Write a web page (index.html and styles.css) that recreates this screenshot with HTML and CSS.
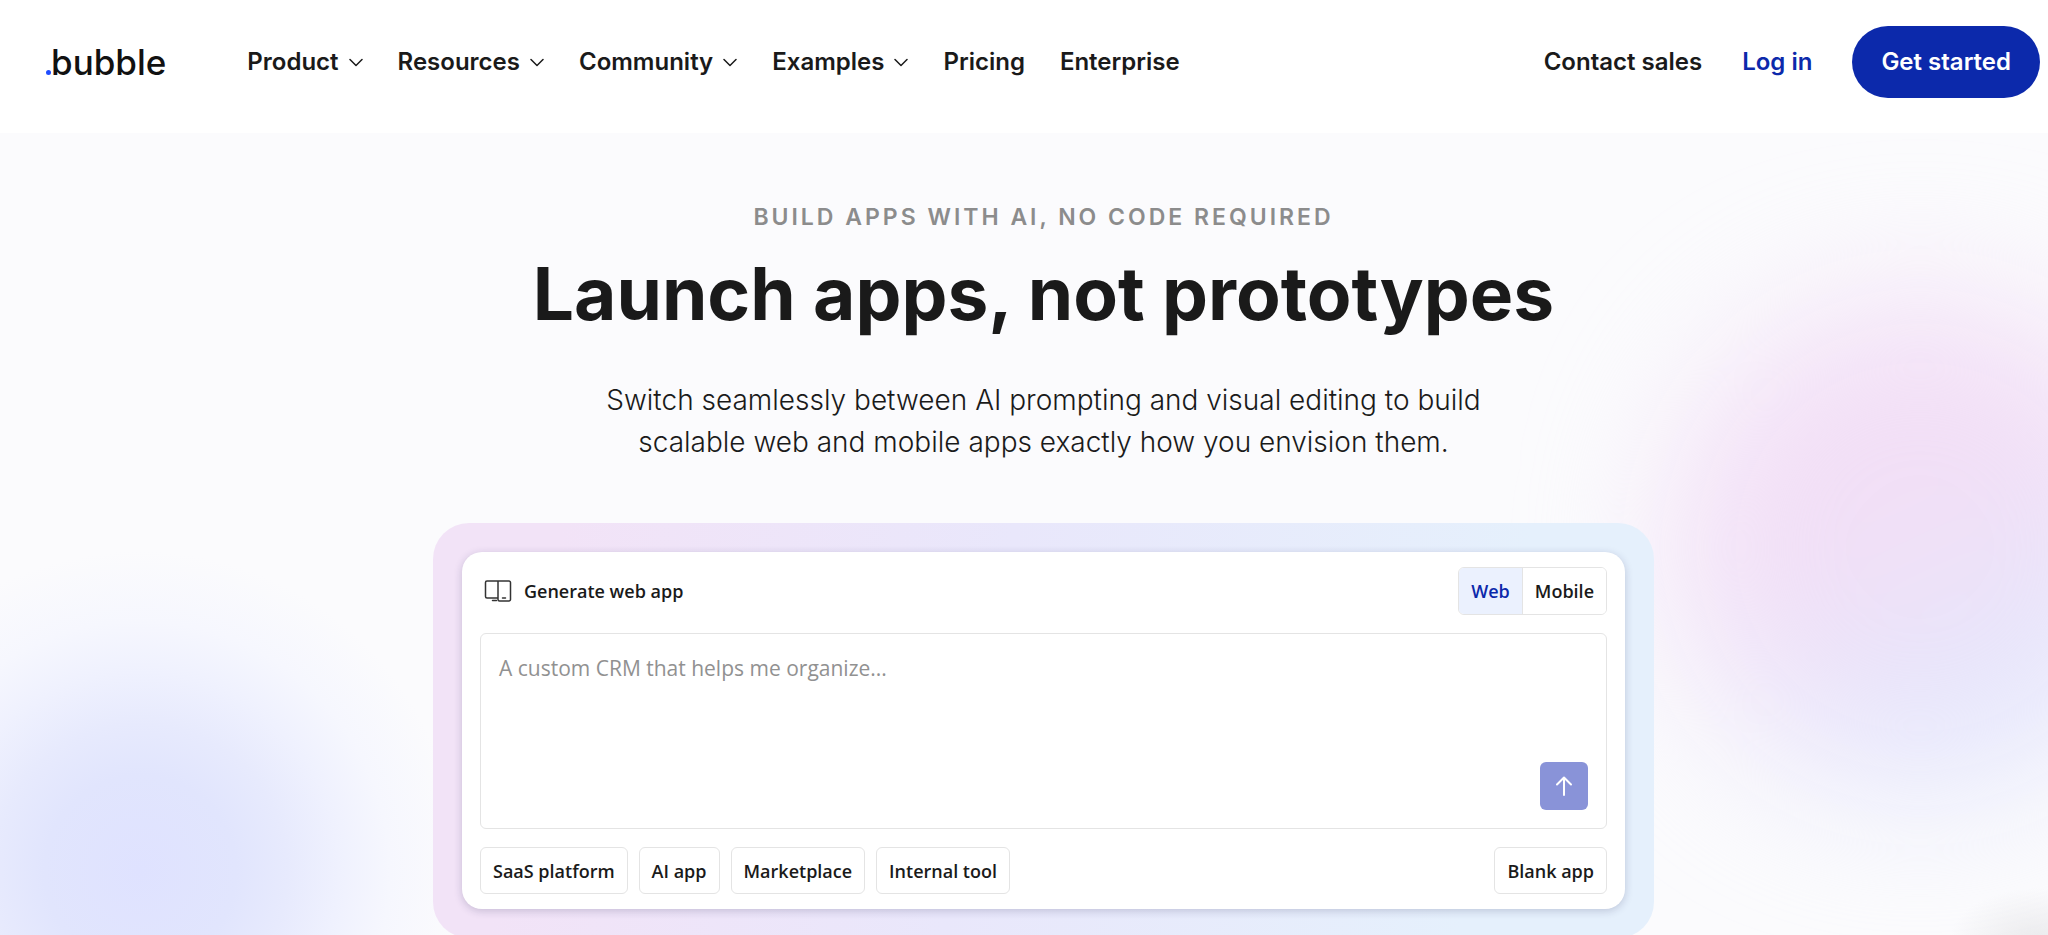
FILE: index.html
```html
<!DOCTYPE html>
<html lang="en">
<head>
    <meta charset="UTF-8">
    <meta name="viewport" content="width=device-width, initial-scale=1.0">
    <title>Bubble</title>
    <link rel="stylesheet" href="styles.css">
</head>
<body>
    <header class="header">
        <a class="logo" href="#"><span class="logo-dot"></span>bubble</a>
        <nav class="nav">
            <button class="nav-item" type="button">Product
                <svg class="chevron" viewBox="0 0 14 9"><path d="M1 1.5l6 6 6-6"/></svg>
            </button>
            <button class="nav-item" type="button">Resources
                <svg class="chevron" viewBox="0 0 14 9"><path d="M1 1.5l6 6 6-6"/></svg>
            </button>
            <button class="nav-item" type="button">Community
                <svg class="chevron" viewBox="0 0 14 9"><path d="M1 1.5l6 6 6-6"/></svg>
            </button>
            <button class="nav-item" type="button">Examples
                <svg class="chevron" viewBox="0 0 14 9"><path d="M1 1.5l6 6 6-6"/></svg>
            </button>
            <a class="nav-item" href="#">Pricing</a>
            <a class="nav-item" href="#">Enterprise</a>
        </nav>
        <div class="actions">
            <a class="nav-item" href="#">Contact sales</a>
            <a class="nav-item login" href="#">Log in</a>
            <a class="nav-item get-started" href="#">Get started</a>
        </div>
    </header>

    <main class="hero">
        <div class="glow glow-left"></div>
        <div class="glow glow-right"></div>
        <div class="glow glow-corner"></div>

        <p class="eyebrow">Build apps with AI, no code required</p>
        <h1 class="title">Launch apps, not prototypes</h1>
        <p class="subtitle">Switch seamlessly between AI prompting and visual editing to build<br>scalable web and mobile apps exactly how you envision them.</p>

        <div class="frame">
            <form class="card">
                <div class="row">
                    <label class="card-label" for="prompt">
                        <svg class="devices" viewBox="0 0 28 24">
                            <path d="M14 19H3a1.500 1.500 0 0 1-1.500-1.500v-14A1.500 1.500 0 0 1 3 2h22a1.500 1.500 0 0 1 1.500 1.500v17A1.500 1.500 0 0 1 25 22h-9.500a1.500 1.500 0 0 1-1.500-1.500V2"/>
                            <path d="M8.500 21.500h4M18.500 19h3"/>
                        </svg>
                        Generate web app
                    </label>
                    <div class="toggle">
                        <button class="toggle-btn active" type="button" aria-pressed="true">Web</button>
                        <button class="toggle-btn" type="button" aria-pressed="false">Mobile</button>
                    </div>
                </div>
                <div class="prompt-box">
                    <textarea class="prompt" id="prompt" placeholder="A custom CRM that helps me organize..."></textarea>
                    <button class="send" type="submit" aria-label="Generate">
                        <svg class="arrow" viewBox="0 0 20 20"><path d="M10 19V1.500M3 8.500l7-7 7 7"/></svg>
                    </button>
                </div>
                <div class="row">
                    <div class="chips">
                        <button class="chip" type="button">SaaS platform</button>
                        <button class="chip" type="button">AI app</button>
                        <button class="chip" type="button">Marketplace</button>
                        <button class="chip" type="button">Internal tool</button>
                    </div>
                    <button class="chip" type="button">Blank app</button>
                </div>
            </form>
        </div>
    </main>
</body>
</html>
```
FILE: styles.css
```css
* {
    box-sizing: border-box;
}
body {
    margin: 0;
    min-height: 100vh;
    display: flex;
    flex-direction: column;
    font-family: Inter, "Noto Sans", sans-serif;
    color: #1a1a1a;
    background: #fff;
}
button, textarea {
    font-family: inherit;
    color: inherit;
}
button {
    cursor: pointer;
}
svg {
    fill: none;
    stroke: currentColor;
    stroke-linecap: round;
    stroke-linejoin: round;
}

/* header */
.header {
    display: flex;
    align-items: center;
    padding: 26px 8px 35px 46px;
}
.logo {
    display: flex;
    align-items: baseline;
    font-size: 35px;
    font-weight: 500;
    line-height: 40px;
    color: #111;
    text-decoration: none;
}
.logo-dot {
    width: 5px;
    height: 5px;
    border-radius: 50%;
    background: #1f4dff;
}
.nav {
    display: flex;
    gap: 35px;
    margin-left: 81px;
}
.nav-item {
    display: flex;
    align-items: center;
    gap: 10px;
    padding: 0;
    border: 0;
    background: none;
    font-size: 24px;
    font-weight: 600;
    line-height: 32px;
    white-space: nowrap;
    color: #1a1a1a;
    text-decoration: none;
}
.chevron {
    width: 14px;
    height: 9px;
    stroke-width: 1.5;
}
.actions {
    display: flex;
    align-items: center;
    gap: 40px;
    margin-left: auto;
}
.login {
    color: #0c29ab;
}
.get-started {
    padding: 20px 29px;
    border-radius: 36px;
    background: #0c29ab;
    color: #fff;
}

/* hero */
.hero {
    position: relative;
    flex: 1;
    overflow: hidden;
    padding: 68px 0 0 39px;
    text-align: center;
    background: #fbfbfd;
}
.glow {
    position: absolute;
    border-radius: 50%;
}
.glow-left {
    left: -180px;
    bottom: -253px;
    width: 640px;
    height: 640px;
    background: radial-gradient(closest-side, #dfe2ff 0%, #e1e5fd 30%, #e7eafd 46%, #eff1fe 62%, #f6f7fe 78%, rgba(251, 251, 253, 0) 100%);
}
.glow-right {
    right: -122px;
    top: 164px;
    width: 500px;
    height: 500px;
    background: linear-gradient(155deg, #f2dff6 45%, #e5e7fc 75%);
    filter: blur(68px);
}
.glow-corner {
    right: -80px;
    bottom: -60px;
    width: 180px;
    height: 110px;
    background: radial-gradient(closest-side, #d8d8da, rgba(251, 251, 253, 0));
    opacity: 0.5;
}
.eyebrow, .title, .subtitle, .frame {
    position: relative;
}
.eyebrow {
    margin: 0;
    font-size: 23px;
    font-weight: 600;
    line-height: 32px;
    letter-spacing: 3px;
    text-transform: uppercase;
    color: #8c8c8c;
}
.title {
    margin: 13px 0 0;
    font-size: 73px;
    font-weight: 700;
    line-height: 96px;
}
.subtitle {
    margin: 37px 0 0;
    font-size: 28px;
    font-weight: 300;
    line-height: 42px;
}

/* prompt card */
.frame {
    max-width: 1221px;
    margin: 60px auto 0;
    padding: 29px;
    border-radius: 36px;
    background: linear-gradient(100deg, #f2e3f7 10%, #e9e7fb 45%, #e5f0fc 85%);
    font-family: "Open Sans", "Noto Sans", sans-serif;
}
.card {
    display: flex;
    flex-direction: column;
    gap: 18px;
    padding: 15px 18px;
    border-radius: 20px;
    background: #fff;
    box-shadow: 0 2px 8px rgba(30, 30, 80, 0.2);
}
.row {
    display: flex;
    align-items: center;
    justify-content: space-between;
}
.card-label {
    display: flex;
    align-items: center;
    gap: 12px;
    padding-left: 4px;
    font-size: 18px;
    font-weight: 600;
}
.devices {
    width: 28px;
    height: 24px;
    stroke: #333;
    stroke-width: 1.5;
}
.toggle {
    display: flex;
    border: 1px solid #e4e4e4;
    border-radius: 6px;
    overflow: hidden;
}
.toggle-btn {
    height: 46px;
    padding: 0 12px;
    border: 0;
    background: #fff;
    font-size: 18px;
    font-weight: 600;
}
.toggle-btn.active {
    border-right: 1px solid #e4e4e4;
    background: #ebf1fe;
    color: #0c29ab;
}
.prompt-box {
    position: relative;
    display: flex;
}
.prompt {
    flex: 1;
    height: 196px;
    padding: 20px 18px;
    border: 1px solid #e4e4e4;
    border-radius: 6px;
    outline: none;
    resize: none;
    font-size: 21px;
    line-height: 28px;
}
.prompt::placeholder {
    color: #919191;
}
.send {
    position: absolute;
    right: 19px;
    bottom: 19px;
    display: flex;
    align-items: center;
    justify-content: center;
    width: 48px;
    height: 48px;
    padding: 0;
    border: 0;
    border-radius: 6px;
    background: #8993d8;
    color: #fff;
}
.arrow {
    width: 20px;
    height: 20px;
    stroke-width: 2;
}
.chips {
    display: flex;
    gap: 11px;
}
.chip {
    height: 47px;
    padding: 0 12px;
    border: 1px solid #e4e4e4;
    border-radius: 6px;
    background: #fff;
    font-size: 18px;
    font-weight: 600;
}
```
